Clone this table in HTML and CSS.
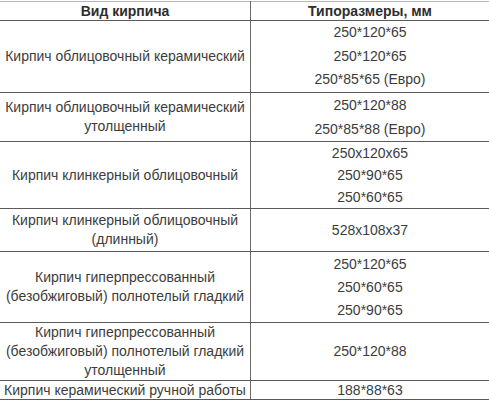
FILE: index.html
```html
<!DOCTYPE html>
<html lang="ru">
<head>
<meta charset="utf-8">
<link rel="stylesheet" href="styles.css">
</head>
<body>
<table class="bricks">
  <tr class="r0">
    <th class="kind">Вид кирпича</th>
    <th class="size">Типоразмеры, мм</th>
  </tr>
  <tr class="r1">
    <td class="kind">Кирпич облицовочный керамический</td>
    <td class="size"><div class="v">250*120*65</div><div class="v">250*120*65</div><div class="v">250*85*65 (Евро)</div></td>
  </tr>
  <tr class="r2">
    <td class="kind">Кирпич облицовочный керамический утолщенный</td>
    <td class="size"><div class="v">250*120*88</div><div class="v">250*85*88 (Евро)</div></td>
  </tr>
  <tr class="r3">
    <td class="kind">Кирпич клинкерный облицовочный</td>
    <td class="size"><div class="v">250x120x65</div><div class="v">250*90*65</div><div class="v">250*60*65</div></td>
  </tr>
  <tr class="r4">
    <td class="kind">Кирпич клинкерный облицовочный (длинный)</td>
    <td class="size"><div class="v">528x108x37</div></td>
  </tr>
  <tr class="r5">
    <td class="kind">Кирпич гиперпрессованный (безобжиговый) полнотелый гладкий</td>
    <td class="size"><div class="v">250*120*65</div><div class="v">250*60*65</div><div class="v">250*90*65</div></td>
  </tr>
  <tr class="r6">
    <td class="kind">Кирпич гиперпрессованный (безобжиговый) полнотелый гладкий утолщенный</td>
    <td class="size"><div class="v">250*120*88</div></td>
  </tr>
  <tr class="r7">
    <td class="kind">Кирпич керамический ручной работы</td>
    <td class="size"><div class="v">188*88*63</div></td>
  </tr>
</table>
</body>
</html>
```
FILE: styles.css
```css
html, body {
  margin: 0;
  padding: 0;
  background: #fff;
}
body {
  font-family: "Liberation Sans", Arial, sans-serif;
  font-size: 14px;
  color: #3c3c3c;
}
.bricks {
  width: 489px;
  margin-top: 1px;
  border-collapse: collapse;
  border-top: 1px solid #b5b5b5;
  table-layout: fixed;
}
.bricks th,
.bricks td {
  padding: 0;
  text-align: center;
  vertical-align: middle;
  border-bottom: 1px solid #5a5a5a;
  line-height: 19px;
}
.bricks th {
  font-weight: bold;
  color: #2e2e2e;
  line-height: 18px;
}
.bricks .kind {
  width: 250px;
  border-right: 1px solid #6a6a6a;
}
.bricks .size .v {
  line-height: 23px;
}
.r0 th { height: 18px; }
.r1 td { height: 71px; }
.r1 .size .v { line-height: 23.5px; }
.r2 td { height: 48px; }
.r2 .size .v { line-height: 24px; }
.r3 td { height: 66px; }
.r3 .size .v { line-height: 22px; }
.r4 td { height: 42px; }
.r5 td { height: 70px; }
.r5 .size .v { line-height: 23px; }
.r6 td { height: 57px; }
.r7 td { height: 18px; line-height: 18px; }
.r7 .size .v { line-height: 18px; }
```
